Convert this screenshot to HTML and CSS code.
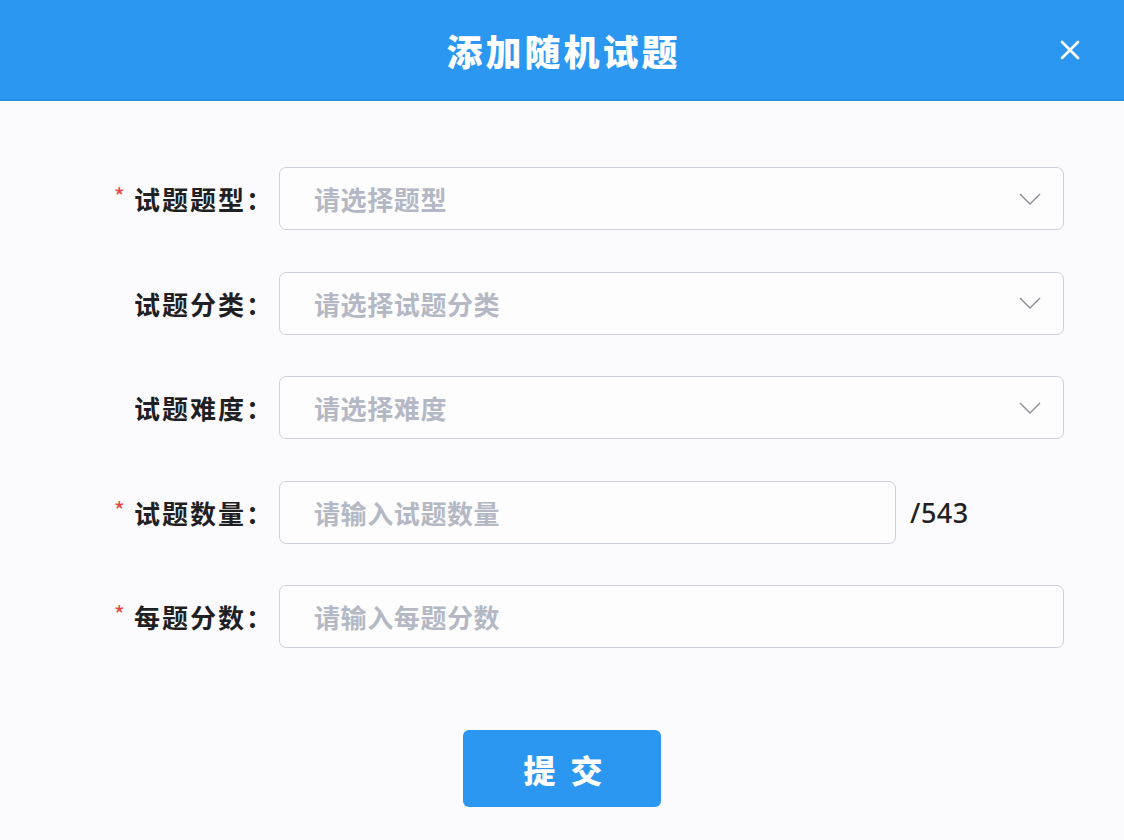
FILE: index.html
```html
<!DOCTYPE html>
<html lang="zh-CN">
<head>
<meta charset="utf-8">
<title>添加随机试题</title>
<link rel="stylesheet" href="styles.css">
</head>
<body>
<div class="dialog">
  <header class="dialog-header">
    <h1 class="dialog-title">添加随机试题</h1>
    <button class="close-btn" aria-label="关闭">
      <svg width="22" height="22" viewBox="0 0 22 22"><path d="M3 3 L19 19 M19 3 L3 19" stroke="#fff" stroke-width="2.6" stroke-linecap="round" fill="none"/></svg>
    </button>
  </header>
  <main class="dialog-body">
    <form class="form">
      <div class="row">
        <label class="label"><span class="req">*</span>试题题型：</label>
        <div class="field select"><span class="placeholder">请选择题型</span>
          <svg class="chev" width="22" height="12" viewBox="0 0 22 12"><path d="M1 1 L11 11 L21 1" stroke="#8a8d94" stroke-width="1.4" fill="none"/></svg>
        </div>
      </div>
      <div class="row">
        <label class="label">试题分类：</label>
        <div class="field select"><span class="placeholder">请选择试题分类</span>
          <svg class="chev" width="22" height="12" viewBox="0 0 22 12"><path d="M1 1 L11 11 L21 1" stroke="#8a8d94" stroke-width="1.4" fill="none"/></svg>
        </div>
      </div>
      <div class="row">
        <label class="label">试题难度：</label>
        <div class="field select"><span class="placeholder">请选择难度</span>
          <svg class="chev" width="22" height="12" viewBox="0 0 22 12"><path d="M1 1 L11 11 L21 1" stroke="#8a8d94" stroke-width="1.4" fill="none"/></svg>
        </div>
      </div>
      <div class="row">
        <label class="label"><span class="req">*</span>试题数量：</label>
        <div class="field-wrap">
          <div class="field short"><span class="placeholder">请输入试题数量</span></div>
          <span class="suffix">/543</span>
        </div>
      </div>
      <div class="row">
        <label class="label"><span class="req">*</span>每题分数：</label>
        <div class="field"><span class="placeholder">请输入每题分数</span></div>
      </div>
      <div class="actions">
        <button type="button" class="submit">提交</button>
      </div>
    </form>
  </main>
</div>
</body>
</html>
```
FILE: styles.css
```css
html, body {
  margin: 0;
  padding: 0;
}
body {
  background: #fbfbfd;
  font-family: "Noto Sans CJK SC", "Noto Sans", sans-serif;
  width: 1124px;
  height: 840px;
  overflow: hidden;
}
.dialog-header {
  height: 99px;
  background: #2c97f0;
  border-bottom: 2px solid #2a8ee2;
  display: flex;
  align-items: center;
  justify-content: center;
  position: relative;
}
.dialog-title {
  margin: 0;
  color: #fff;
  font-size: 36px;
  font-weight: 900;
  letter-spacing: 3px;
  line-height: 1;
  padding-left: 3px;
}
.close-btn {
  position: absolute;
  right: 43px;
  top: 39px;
  background: none;
  border: 0;
  padding: 0;
  width: 22px;
  height: 22px;
  cursor: pointer;
}
.dialog-body {
  padding-top: 66px;
}
.form {
  display: flex;
  flex-direction: column;
  gap: 41.5px;
}
.row {
  display: grid;
  grid-template-columns: 256px 785px;
  column-gap: 23px;
  align-items: center;
}
.label {
  text-align: right;
  font-size: 26px;
  font-weight: 700;
  color: #1f1f24;
  letter-spacing: 2px;
  white-space: nowrap;
  margin-right: -18px;
}
.req {
  color: #e5473d;
  font-size: 24px;
  font-weight: 400;
  margin-right: 9px;
  letter-spacing: 0;
  position: relative;
  top: -4px;
}
.field {
  height: 63px;
  box-sizing: border-box;
  border: 1.5px solid #ccd0d8;
  border-radius: 7px;
  background: #fdfdfe;
  display: flex;
  align-items: center;
  padding-left: 34px;
  padding-right: 22px;
}
.placeholder {
  flex: 1;
  color: #b4b8c4;
  font-size: 26px;
  font-weight: 700;
  letter-spacing: 0.6px;
}
.chev {
  flex: none;
}
.field-wrap {
  display: flex;
  align-items: center;
}
.field.short {
  width: 617px;
  flex: none;
}
.suffix {
  margin-left: 14px;
  font-family: "Noto Sans", sans-serif;
  font-size: 27px;
  font-weight: 500;
  color: #1f1f24;
  letter-spacing: 0.5px;
}
.actions {
  display: flex;
  justify-content: center;
  margin-top: 40.5px;
  padding-right: 1px;
}
.submit {
  width: 198px;
  height: 77px;
  background: #2c97f0;
  border: 0;
  border-radius: 6px;
  color: #fff;
  font-family: "Noto Sans CJK SC", sans-serif;
  font-size: 32px;
  font-weight: 900;
  letter-spacing: 15px;
  padding-left: 24px;
  cursor: pointer;
}
```
